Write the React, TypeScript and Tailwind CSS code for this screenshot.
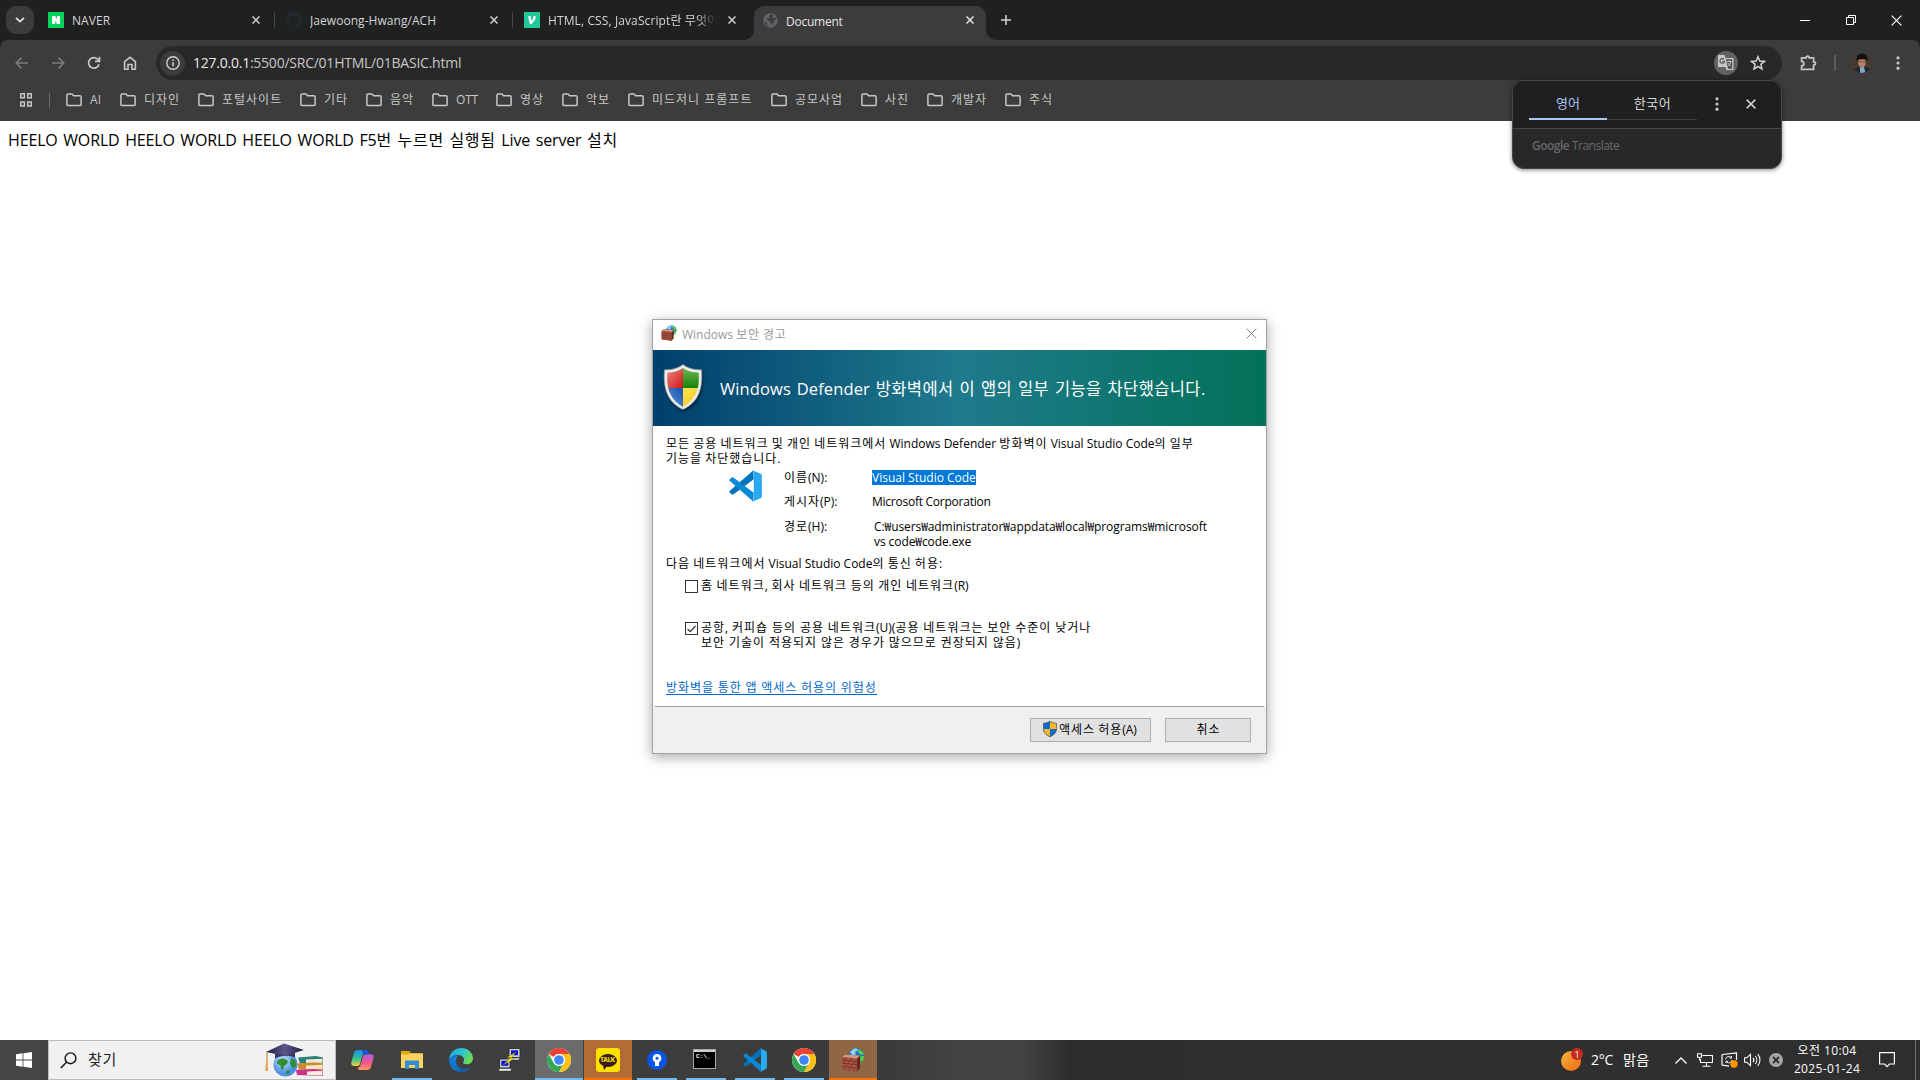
import type { ReactNode } from "react";

const bookmarks: { name: string; width: string; track: string }[] = [
  { name: "AI", width: "w-[54px]", track: "tracking-[0.1px]" },
  { name: "디자인", width: "w-[78px]", track: "tracking-[0.95px]" },
  { name: "포털사이트", width: "w-[102px]", track: "tracking-[1px]" },
  { name: "기타", width: "w-[66px]", track: "tracking-[1px]" },
  { name: "음악", width: "w-[66px]", track: "tracking-[1px]" },
  { name: "OTT", width: "w-[64px]", track: "tracking-[-0.2px]" },
  { name: "영상", width: "w-[66px]", track: "tracking-[1px]" },
  { name: "악보", width: "w-[66px]", track: "tracking-[1px]" },
  { name: "미드저니 프롬프트", width: "w-[143px]", track: "tracking-[1px]" },
  { name: "공모사업", width: "w-[90px]", track: "tracking-[1px]" },
  { name: "사진", width: "w-[66px]", track: "tracking-[1px]" },
  { name: "개발자", width: "w-[78px]", track: "tracking-[1px]" },
  { name: "주식", width: "w-[66px]", track: "tracking-[1px]" },
];

/* Gives Hangul runs their own letter spacing, leaving Latin runs as they are. */
function Mixed({ text, hangul = "tracking-[0.96px]" }: { text: string; hangul?: string }) {
  return (
    <>
      {text.split(/([가-힣]+)/).map((part, i) =>
        i % 2 ? (
          <span key={i} className={hangul}>
            {part}
          </span>
        ) : (
          part
        ),
      )}
    </>
  );
}

function Cross({ size, className, sw = 1.5 }: { size: number; className?: string; sw?: number }) {
  return (
    <svg width={size} height={size} viewBox="0 0 10 10" className={className} stroke="currentColor" strokeWidth={sw} fill="none">
      <path d="M0.6 0.6 9.4 9.4M9.4 0.6 0.6 9.4" />
    </svg>
  );
}

function Folder() {
  return (
    <svg width="16" height="14" viewBox="0 0 16 14" fill="none" stroke="#c7c7c7" strokeWidth="1.5" className="shrink-0">
      <path d="M0.9 2.2c0-.7.4-1.1 1.1-1.1h4l1.6 1.7h6.3c.7 0 1.2.4 1.2 1.1v7.6c0 .7-.5 1.1-1.2 1.1H2c-.7 0-1.1-.4-1.1-1.1z" />
    </svg>
  );
}

function Dots() {
  return (
    <svg width="4" height="14" viewBox="0 0 4 14" fill="#c7c7c7">
      <circle cx="2" cy="1.8" r="1.6" />
      <circle cx="2" cy="7" r="1.6" />
      <circle cx="2" cy="12.2" r="1.6" />
    </svg>
  );
}

function Chrome() {
  return (
    <svg width="24" height="24" viewBox="0 0 24 24">
      <circle cx="12" cy="12" r="12" fill="#fff" />
      <path d="M1.6 6A12 12 0 0 1 22.4 6H12a6 6 0 0 0-5.2 3z" fill="#ea4335" />
      <path d="M1.6 6 6.8 15A6 6 0 0 0 12 18l-1.5 5.9A12 12 0 0 1 1.6 6z" fill="#34a853" />
      <path d="M6.8 15A6 6 0 0 0 17.2 15L12 24A12 12 0 0 1 10.4 23.9z" fill="#34a853" />
      <path d="M22.4 6A12 12 0 0 1 12 24l5.2-9A6 6 0 0 0 12 6z" fill="#fbc116" />
      <circle cx="12" cy="12" r="6" fill="#fff" />
      <circle cx="12" cy="12" r="4.8" fill="#4285f4" />
    </svg>
  );
}

function VSCode({ width, height }: { width: number; height: number }) {
  return (
    <svg width={width} height={height} viewBox="0 0 24 24" preserveAspectRatio="none">
      <path d="M17.6 0.4 0.6 15.6c-.4.4-.4 1 0 1.4l1.3 1.2c.4.3.8.3 1.2.1L18 7z" fill="#0073ba" />
      <path d="M17.6 23.6 0.6 8.3c-.4-.4-.4-1 0-1.4l1.3-1.2c.4-.3.8-.3 1.2-.1L18 17z" fill="#0a8ad6" />
      <path d="M17.4 23.7c-.5 0-.9-.2-1.2-.5.7.7 1.8.2 1.8-.8V1.6c0-1-1.100-1.500-1.800-.8.4-.5 1.100-.6 1.800-.3l4.900 2.400c.6.3 1 .9 1 1.500v15.200c0 .6-.4 1.200-1 1.500l-4.900 2.400c-.200.100-.400.200-.600.200z" fill="#29a9f0" />
    </svg>
  );
}

function Firewall({ size }: { size: number }) {
  return (
    <svg width={size} height={size} viewBox="0 0 24 24">
      <circle cx="15.500" cy="8" r="7.800" fill="#2374d6" />
      <path d="M9 4.500C10.500 2 13 .4 15.500.3L17 2l-3 2 1 2-3 1.500z" fill="#8fd4f7" />
      <path d="M16 1.500c3-.5 6 2 7 4.500l-2.500 1L18 5.500zM19 8.500l4-.5c0 3-1 5-3 6.500z" fill="#5bd32c" />
      <path d="M1 9l3-2.500 15 1V20l-3 3.500L1 21.500z" fill="#6b291c" />
      <path d="M1 9l15 1.500v13L1 21.500z" fill="#a85443" />
      <path d="M1 9l3-2.500 15 1-3 3z" fill="#d09a85" />
      <path d="M1 12l15 1.500M1 15.200l15 1.500M1 18.400l15 1.700M5 9.500v3M10.500 10v3M3 12.300v3M8 12.800v3M13 13.400v3M5 15.700v3M10.500 16.300v3M3 18.800v3M8 19.300v3M13 20v3" stroke="#6e2c1f" strokeWidth=".7" />
    </svg>
  );
}

function Shield() {
  return (
    <svg width="40" height="46" viewBox="0 0 40 46" className="drop-shadow-[1px_2px_1px_rgba(0,0,0,0.5)]">
      <defs>
        <clipPath id="shieldClip">
          <path d="M20 4C16 7 10 8.500 4.500 8.500 3 22 6 35 20 43 34 35 37 22 35.500 8.500 30 8.500 24 7 20 4z" />
        </clipPath>
        <linearGradient id="shRed" x1="0" y1="0" x2="1" y2="1">
          <stop offset="0" stopColor="#f4a49a" />
          <stop offset="1" stopColor="#cf1515" />
        </linearGradient>
        <linearGradient id="shGreen" x1="0" y1="0" x2="0" y2="1">
          <stop offset="0" stopColor="#7fc05c" />
          <stop offset="1" stopColor="#138208" />
        </linearGradient>
        <linearGradient id="shBlue" x1="1" y1="0" x2="0" y2="1">
          <stop offset="0" stopColor="#1a50a8" />
          <stop offset="1" stopColor="#6ea8ee" />
        </linearGradient>
        <linearGradient id="shYellow" x1="0" y1="0" x2="1" y2="1">
          <stop offset="0" stopColor="#ffe94d" />
          <stop offset="1" stopColor="#f2b51c" />
        </linearGradient>
      </defs>
      <path d="M20 .5C15 4.500 8 6 1.500 5.800 0 23 3.500 38 20 45.500 36.500 38 40 23 38.500 5.800 32 6 25 4.500 20 .5z" fill="#e9ecec" stroke="#8e9794" strokeWidth=".7" />
      <g clipPath="url(#shieldClip)">
        <rect width="20" height="24" fill="url(#shRed)" />
        <rect x="20" width="20" height="24" fill="url(#shGreen)" />
        <rect y="24" width="20" height="22" fill="url(#shBlue)" />
        <rect x="20" y="24" width="20" height="22" fill="url(#shYellow)" />
      </g>
    </svg>
  );
}

function SmallShield() {
  return (
    <svg width="14" height="16" viewBox="0 0 14 16">
      <path d="M7 .3C5 1.600 2.800 2.200.4 2.300v5.200C.4 11.500 3.200 14.200 7 15.700z" fill="#1268c9" />
      <path d="M7 .3c2 1.300 4.200 1.900 6.600 2v5.200c0 4-2.800 6.700-6.600 8.200z" fill="#fbb829" />
      <path d="M.4 8H7v7.700C3.300 14.300.7 11.700.4 8z" fill="#fbb829" />
      <path d="M13.600 8H7v7.700c3.700-1.400 6.300-4 6.600-7.700z" fill="#1268c9" />
      <path d="M7 .3C5 1.600 2.800 2.200.4 2.300v5.200C.4 11.500 3.200 14.200 7 15.700c3.800-1.500 6.600-4.200 6.600-8.200V2.300C11.200 2.200 9 1.600 7 .3z" fill="none" stroke="#4a5560" strokeWidth=".8" />
    </svg>
  );
}

function Tab({ icon, title, track, width, fade }: { icon: ReactNode; title: string; track: string; width: string; fade?: boolean }) {
  return (
    <div className={`flex h-4 items-center ${width}`}>
      {icon}
      <div className={`ml-2 flex-1 overflow-hidden whitespace-nowrap text-[12px] leading-4 text-[#d5d5d5] ${track} ${fade ? "[mask-image:linear-gradient(90deg,#000_88%,transparent_100%)]" : ""}`}>
        <span className="relative top-px">{title}</span>
      </div>
      <Cross size={8} className="ml-3 shrink-0 text-[#d0d0d0]" sw={1.9} />
      <div className="w-3.5" />
    </div>
  );
}

function TitleStrip() {
  return (
    <div className="flex h-10 items-center bg-[#1f2020]">
      <div className="ml-1.5 flex size-7 items-center justify-center rounded-[10px] bg-[#3c3c3c]">
        <svg width="10" height="6" viewBox="0 0 10 6" fill="none" stroke="#e3e3e3" strokeWidth="1.8">
          <path d="M1 .8 5 4.600 9 .8" />
        </svg>
      </div>
      <div className="w-3.5" />
      <Tab
        width="w-[226px]"
        title="NAVER"
        track="tracking-[0.05px]"
        icon={
          <svg width="16" height="16" viewBox="0 0 16 16" className="shrink-0">
            <rect width="16" height="16" fill="#06d15c" />
            <path d="M4.100 4h3L9 7.300V4h3v8H9L7.100 8.800V12h-3z" fill="#fff" />
          </svg>
        }
      />
      <div className="h-4 w-px bg-[#474747]" />
      <div className="w-[11px]" />
      <Tab
        width="w-[226px]"
        title="Jaewoong-Hwang/ACH"
        track="tracking-[0.05px]"
        icon={
          <svg width="16" height="16" viewBox="0 0 16 16" className="shrink-0" fill="#24292f">
            <path d="M8 0C3.580 0 0 3.580 0 8c0 3.540 2.290 6.530 5.470 7.590.4.070.55-.17.55-.38 0-.19-.010-.82-.010-1.490-2.010.37-2.530-.49-2.690-.94-.090-.23-.48-.94-.82-1.130-.28-.15-.68-.52-.010-.53.63-.010 1.080.58 1.230.82.72 1.210 1.870.87 2.330.66.070-.52.28-.87.51-1.070-1.780-.2-3.640-.89-3.640-3.950 0-.87.31-1.590.82-2.150-.080-.2-.36-1.020.080-2.120 0 0 .67-.21 2.200.82.64-.18 1.320-.27 2-.27s1.360.090 2 .27c1.530-1.040 2.200-.82 2.200-.82.44 1.100.16 1.920.080 2.120.51.56.82 1.270.82 2.150 0 3.070-1.870 3.750-3.650 3.950.29.25.54.73.54 1.480 0 1.070-.010 1.930-.010 2.200 0 .21.15.46.55.38A8.010 8.010 0 0 0 16 8c0-4.420-3.580-8-8-8z" />
          </svg>
        }
      />
      <div className="h-4 w-px bg-[#474747]" />
      <div className="w-[11px]" />
      <Tab
        width="w-[226px]"
        title="HTML, CSS, JavaScript란 무엇이며"
        track="tracking-[0.11px]"
        fade
        icon={
          <svg width="16" height="16" viewBox="0 0 16 16" className="shrink-0">
            <rect width="16" height="16" rx="1" fill="#20c997" />
            <path d="M4 4.600 6.600 4l1 5.200c1.300-1.800 1.900-3 1.600-4.600.9-.8 2.500-.8 2.500.6 0 2-2.200 5-4.400 7H6z" fill="#fff" />
          </svg>
        }
      />
      <div className="w-[4px]" />
      <div className="relative flex h-[34px] w-[232px] items-center self-end rounded-t-[10px] bg-[#3c3c3c] pb-1.5">
        <svg width="10" height="10" viewBox="0 0 10 10" className="absolute bottom-0 -left-2.5" fill="#3c3c3c">
          <path d="M10 0v10H0A10 10 0 0 0 10 0z" />
        </svg>
        <svg width="10" height="10" viewBox="0 0 10 10" className="absolute -right-2.5 bottom-0" fill="#3c3c3c">
          <path d="M0 0v10h10A10 10 0 0 1 0 0z" />
        </svg>
        <svg width="15" height="15" viewBox="0 0 15 15" className="ml-[9px]">
          <circle cx="7.500" cy="7.500" r="7.200" fill="#5f6368" />
          <path d="M8 1.200 6 3.500l1 1.700H5L3.500 7 6 7.600l2 1.700-.5 2.500 3.500-2.300-.3-2L13.500 6 13 4.300 11 5.500 9.500 4.200 10.500 2zM1.500 8l3 2.500.2 2.500C2.800 12 1.700 10.200 1.500 8z" fill="#3c3c3c" />
        </svg>
        <span className="relative top-[1.5px] ml-2 flex-1 text-[12px] leading-4 tracking-[-0.25px] text-[#e3e3e3]">Document</span>
        <Cross size={8} className="mr-3 text-[#e3e3e3]" sw={1.900} />
      </div>
      <svg width="10" height="10" viewBox="0 0 10 10" className="ml-[15px]" stroke="#d0d0d0" strokeWidth="1.600">
        <path d="M5 0v10M0 5h10" />
      </svg>
      <div className="flex-1" />
      <div className="flex w-[120px] items-center text-white">
        <div className="h-px w-2.5 bg-white" />
        <svg width="10" height="10" viewBox="0 0 10 10" className="ml-9" fill="none" stroke="#fff">
          <path d="M.5 2.500h7v7h-7zM2.500 2.500v-2h7v7h-2" />
        </svg>
        <Cross size={11} className="ml-[35px]" sw={1.100} />
      </div>
    </div>
  );
}

function Toolbar() {
  return (
    <div className="bg-[#1f2020]">
      <div className="flex h-[46px] items-center rounded-t-[8px] bg-[#3c3c3c]">
        <svg width="14" height="12" viewBox="0 0 14 12" className="ml-[15px]" fill="none" stroke="#7b7b7b" strokeWidth="1.500">
          <path d="M6.500.6 1.200 6l5.300 5.400M1.500 6H13" />
        </svg>
        <svg width="14" height="12" viewBox="0 0 14 12" className="ml-[22px]" fill="none" stroke="#7b7b7b" strokeWidth="1.500">
          <path d="M7.500.6 12.800 6l-5.300 5.400M12.500 6H1" />
        </svg>
        <svg width="14" height="14" viewBox="0 0 14 14" className="ml-[22px]" fill="none" stroke="#c7c7c7" strokeWidth="1.700">
          <path d="M12 8.200A5.300 5.300 0 1 1 11.200 3.800L12.300 5M12.500.8v4.600H8" />
        </svg>
        <svg width="14" height="14" viewBox="0 0 14 14" className="ml-[22px]" fill="none" stroke="#c7c7c7" strokeWidth="1.600">
          <path d="M1.600 5.600 7 1.300l5.400 4.300v7.600H9V8.500H5v4.700H1.600z" />
        </svg>
        <div className="ml-[19px] flex h-[34px] w-[1626px] items-center rounded-full bg-[#282828]">
          <div className="ml-1 flex size-[25px] items-center justify-center rounded-full bg-[#3c3c3c]">
            <svg width="14" height="14" viewBox="0 0 14 14" fill="none" stroke="#d0d0d0" strokeWidth="1.400">
              <circle cx="7" cy="7" r="6.200" />
              <path d="M7 6.300v4M7 3.600v1.500" strokeWidth="1.500" />
            </svg>
          </div>
          <span className="ml-2 pb-px text-[14px] tracking-[-0.24px] text-[#c7c7c7]">
            <span className="text-[#e8e8e8]">127.0.0.1</span>:5500/SRC/01HTML/01BASIC.html
          </span>
          <div className="flex-1" />
          <div className="flex size-6 items-center justify-center rounded-full bg-[#626262]">
            <svg width="18" height="18" viewBox="0 0 18 18">
              <path d="M1 1h6.500l1 3H16.500v12H9.500L8.500 13H1z" fill="#c7c7c7" />
              <path d="M9 5.300h6.200v9.400h-4l-.5-1.200z" fill="#4e4e4e" />
              <path d="M7.200 5.700A2.300 2.300 0 1 0 7.500 7.500H5.200" fill="none" stroke="#555" strokeWidth="1.200" />
              <path d="M10 7.500h4.600M12.300 6.300v1.200M14 7.500c-.5 2-1.800 3.500-3.300 4.600M10.800 8.700c.6 1.500 2 2.700 3.600 3.500" fill="none" stroke="#c7c7c7" strokeWidth="1" />
            </svg>
          </div>
          <svg width="16" height="16" viewBox="0 0 16 16" className="mr-4 ml-3" fill="none" stroke="#d0d0d0" strokeWidth="1.500">
            <path d="M8 1.700 9.800 6l4.700.4-3.600 3 1.100 4.600L8 11.500 4 14l1.100-4.600-3.600-3L6.200 6z" />
          </svg>
        </div>
        <svg width="17" height="16" viewBox="0 0 17 16" className="ml-[18px] mb-px" fill="none" stroke="#c7c7c7" strokeWidth="1.700">
          <path d="M1.600 2.900h4.600c0-2.400 3-2.400 3 0h4.400v3.900c2.500 0 2.500 3.200 0 3.200v4.400h-12v-3.500c3-.3 3-4.200 0-4.500z" />
        </svg>
        <div className="ml-[17px] h-4 w-0.5 bg-[#5a5a5a]" />
        <svg width="20" height="20" viewBox="0 0 20 20" className="ml-4">
          <defs>
            <clipPath id="avatarClip">
              <circle cx="10" cy="10" r="10" />
            </clipPath>
          </defs>
          <g clipPath="url(#avatarClip)">
            <rect width="20" height="20" fill="#463a30" />
            <path d="M0 20c1-5 5-6 10-6s9 1 10 6z" fill="#22262d" />
            <path d="M8 14h4l1.500 6H8z" fill="#7fa6cc" />
            <ellipse cx="10" cy="9.500" rx="3.800" ry="4.800" fill="#b98069" />
            <path d="M4.800 8.500C3.500 2 8 .5 10.500.5S16.500 2.500 15.200 8.500L13.800 6.500 8 6.200 6 7z" fill="#120f0e" />
            <path d="M7.500 8.800h2M11 8.800h2" stroke="#4b2c22" strokeWidth=".8" />
          </g>
        </svg>
        <div className="ml-6">
          <Dots />
        </div>
      </div>
      <div className="flex h-[35px] items-start bg-[#3c3c3c] pt-1.5">
        <div className="flex h-4 w-[66px] items-center">
          <svg width="12" height="14" viewBox="0 0 12 14" className="ml-5" fill="none" stroke="#c7c7c7" strokeWidth="1.500">
            <path d="M.8.800h3.600v4H.8zM7.800.800h3.500v4H7.800zM.8 9h3.600v4H.8zM7.800 9h3.500v4H7.800z" />
          </svg>
          <div className="ml-[17px] h-[15px] w-px bg-[#6a6a6a]" />
        </div>
        {bookmarks.map((b) => (
          <div key={b.name} className={`flex h-4 items-center gap-2 ${b.width}`}>
            <Folder />
            <span className={`whitespace-nowrap text-[12px] leading-4 text-[#c7c7c7] ${b.track}`}>{b.name}</span>
          </div>
        ))}
      </div>
    </div>
  );
}

function TranslatePopup() {
  return (
    <div className="absolute top-20 left-[1512px] h-[89px] w-[270px] overflow-hidden rounded-[12px] border border-[#454648] bg-[#282828] shadow-[0_1px_4px_rgba(0,0,0,0.5)]">
      <div className="flex h-12 items-start border-b border-[#47484a] bg-[#1f1f1f] pl-4">
        <div className="flex h-[39px] w-[78px] items-center justify-center border-b-2 border-[#a8c7fa] pt-[9px] text-[13px] text-[#a8c7fa]">영어</div>
        <div className="flex h-[39px] w-[90px] items-center justify-center border-b border-[#3f4042] pt-2 pl-px text-[13px] tracking-[0.5px] text-[#d5d5d5]">한국어</div>
        <div className="mt-4 ml-[18px]">
          <Dots />
        </div>
        <Cross size={10} className="mt-[18px] ml-[27px] text-[#d0d0d0]" sw={1.500} />
      </div>
      <div className="pt-2 pl-[19px] text-[12px] leading-[17px] tracking-[-0.5px] text-[#67696d]">
        <span className="font-semibold">Google</span> Translate
      </div>
    </div>
  );
}

function Field({ label, children, className }: { label: string; children: ReactNode; className: string }) {
  return (
    <div className={`flex ${className}`}>
      <span className="w-[88px]">
        <Mixed text={label} />
      </span>
      {children}
    </div>
  );
}

function SecurityDialog() {
  return (
    <div className="absolute top-[319px] left-[652px] flex h-[435px] w-[615px] flex-col border border-[#a3a3a3] bg-white text-[12px] leading-[15px] whitespace-nowrap text-black shadow-[0_3px_12px_rgba(0,0,0,0.35)]">
      <div className="flex h-[30px] items-center">
        <div className="ml-2 pb-1">
          <Firewall size={16} />
        </div>
        <span className="ml-[5px] flex-1 pb-0.5 text-[#999]">
          <Mixed text="Windows 보안 경고" hangul="tracking-[0.8px]" />
        </span>
        <Cross size={11} className="mr-[9px] mb-1 text-[#8a8a8a]" sw={0.900} />
      </div>
      <div className="flex h-[76px] items-center bg-[linear-gradient(90deg,#003f6d_0%,#1f7a8c_50%,#027158_100%)]">
        <div className="ml-[10px] pb-0.5">
          <Shield />
        </div>
        <span className="ml-[17px] text-[16.500px] tracking-[0.1px] text-white [word-spacing:1.500px]">
          <Mixed text="Windows Defender 방화벽에서 이 앱의 일부 기능을 차단했습니다." hangul="tracking-[0.38px]" />
        </span>
      </div>
      <div className="flex-1 pt-2.5 pl-[13px]">
        <p>
          <Mixed text="모든 공용 네트워크 및 개인 네트워크에서 Windows Defender 방화벽이 Visual Studio Code의 일부" hangul="tracking-[1px]" />
        </p>
        <p>
          <Mixed text="기능을 차단했습니다." />
        </p>
        <div className="flex h-[90px]">
          <div className="mt-1 ml-[63px]">
            <VSCode width={33} height={32} />
          </div>
          <div className="ml-[22px]">
            <Field label="이름(N):" className="mt-1">
              <span className="h-[15px] bg-[#0078d7] text-white">Visual Studio Code</span>
            </Field>
            <Field label="게시자(P):" className="mt-[9px]">
              <span className="tracking-[-0.25px]">Microsoft Corporation</span>
            </Field>
            <Field label="경로(H):" className="mt-2.5">
              <div className="pl-0.5">
                <p className="tracking-[-0.08px]">C:₩users₩administrator₩appdata₩local₩programs₩microsoft</p>
                <p className="tracking-[-0.08px]">vs code₩code.exe</p>
              </div>
            </Field>
          </div>
        </div>
        <p>
          <Mixed text="다음 네트워크에서 Visual Studio Code의 통신 허용:" hangul="tracking-[1px]" />
        </p>
        <div className="mt-[7px] flex pl-[19px]">
          <div className="mt-[2px] size-[13px] border border-[#333]" />
          <span className="ml-[3px] [word-spacing:0.400px]">
            <Mixed text="홈 네트워크, 회사 네트워크 등의 개인 네트워크(R)" hangul="tracking-[1px]" />
          </span>
        </div>
        <div className="mt-[27px] flex pl-[19px]">
          <div className="mt-[2px] flex size-[13px] items-center justify-center border border-[#333]">
            <svg width="9" height="8" viewBox="0 0 9 8" fill="none" stroke="#333" strokeWidth="1.200">
              <path d="M.6 4 3.200 6.700 8.500 1" />
            </svg>
          </div>
          <div className="ml-[3px] [word-spacing:0.700px]">
            <p>
              <Mixed text="공항, 커피숍 등의 공용 네트워크(U)(공용 네트워크는 보안 수준이 낮거나" hangul="tracking-[1px]" />
            </p>
            <p>
              <Mixed text="보안 기술이 적용되지 않은 경우가 많으므로 권장되지 않음)" hangul="tracking-[1px]" />
            </p>
          </div>
        </div>
        <div className="mt-[30px] flex">
          <span className="h-[15px] border-b border-[#0066cc] text-[#0066cc] [word-spacing:0.500px]">
            <Mixed text="방화벽을 통한 앱 액세스 허용의 위험성" hangul="tracking-[1px]" />
          </span>
        </div>
      </div>
      <div className="flex h-[47px] items-start bg-[#f0f0f0]">
        <div className="mx-0.5 flex flex-1 justify-end border-t border-[#a0a0a0] pt-[11px] pr-[13px]">
          <div className="flex h-6 w-[121px] items-center justify-center border border-[#adadad] bg-[#e1e1e1] pr-px pb-0.5">
            <SmallShield />
            <span className="ml-0.5">
              <Mixed text="액세스 허용(A)" />
            </span>
          </div>
          <div className="ml-3.5 flex h-6 w-[86px] items-center justify-center border border-[#adadad] bg-[#e1e1e1] pb-0.5 pl-px tracking-[0.9px]">취소</div>
        </div>
      </div>
    </div>
  );
}

function TaskbarApp({ children, state = "idle" }: { children: ReactNode; state?: "idle" | "open" | "active" | "alert" | "alertDim" }) {
  const bg = { idle: "", open: "", active: "bg-[#6b6b6b]", alert: "bg-[#b56c34]", alertDim: "bg-[#8f6646]" }[state];
  const bar = { idle: "w-0", open: "w-10 bg-[#76b9ed]", active: "w-12 bg-[#76b9ed]", alert: "w-12 bg-[#ff7300]", alertDim: "w-12 bg-[#ff7300]" }[state];
  return (
    <div className={`mr-px flex h-10 w-12 flex-col items-center ${bg}`}>
      <div className="flex h-[38px] items-center justify-center pt-0.5">{children}</div>
      <div className={`h-0.5 ${bar}`} />
    </div>
  );
}

function Taskbar() {
  return (
    <div className="flex h-10 items-center bg-[linear-gradient(90deg,#454545_0px,#404040_400px,#3a3a3a_880px,#434343_960px,#434343_1020px,#2d2d2d_1070px,#303030_1400px,#2e2e2e_1920px)] text-white">
      <div className="flex h-10 w-12 items-center justify-center">
        <svg width="16" height="16" viewBox="0 0 16 16" fill="#fff">
          <path d="M0 2.200 6.600 1.300v6.300H0zM7.400 1.200 16 0v7.600H7.400zM0 8.400h6.600v6.300L0 13.800zM7.400 8.400H16V16l-8.600-1.200z" />
        </svg>
      </div>
      <div className="flex h-10 w-72 items-center border border-[#bdbdbd] bg-[#f1f1f1]">
        <svg width="17" height="17" viewBox="0 0 17 17" className="ml-[11px]" fill="none" stroke="#111" strokeWidth="1.400">
          <circle cx="10.500" cy="6.300" r="5.400" />
          <path d="M6.500 10.200.8 16" />
        </svg>
        <span className="ml-[11px] flex-1 pb-px text-[15px] tracking-[0.8px] text-[#222]">찾기</span>
        <svg width="60" height="34" viewBox="0 0 60 34" className="mr-[11px]">
          <defs>
            <radialGradient id="globeSea" cx=".4" cy=".35">
              <stop offset="0" stopColor="#c9e6ff" />
              <stop offset="1" stopColor="#4f8fe6" />
            </radialGradient>
            <linearGradient id="capTop" x1="0" x2="1">
              <stop offset="0" stopColor="#222140" />
              <stop offset=".5" stopColor="#5b568c" />
              <stop offset="1" stopColor="#23213f" />
            </linearGradient>
          </defs>
          <circle cx="21.500" cy="21.500" r="12" fill="url(#globeSea)" />
          <path d="M13 18.500c2-3 6-3.500 8-2.500l3 2-1 3-3 2-1 4-2-1-.5-3.500-3.500-2zM27 15l4 2 1.500 5-2 3-3-1-1.500-4zM22 28l4-1-1 3.500-3 1z" fill="#2f8f35" />
          <path d="M11 8.500h20v6c-5-2.500-15-2.500-20 1z" fill="#39345f" />
          <path d="M2 9 20 .5l20 6.500-19 6z" fill="url(#capTop)" />
          <path d="M3 9v12" stroke="#d98a45" strokeWidth="1.200" />
          <path d="M2 19h1.800l.4 9H1z" fill="#f0a35c" />
          <path d="M34 14.500 52 13l7 1.500v6H36z" fill="#2e7f7c" />
          <path d="M42 16.500l16.500-.8v4L42 20z" fill="#f2ead6" />
          <path d="M33 20.500 50 19.500l9 1.200v6H35z" fill="#c98a2c" />
          <path d="M42 22.500l16.500-.8v4L42 26z" fill="#f4e6c4" />
          <path d="M32 27 50 26l9 1.200v5.800L33 32z" fill="#c9308f" />
          <path d="M43 28.500l15.500-.8v4.800l-15.500-.5z" fill="#f6ead8" />
        </svg>
      </div>
      <div className="w-[2.500px]" />
      <TaskbarApp>
        <svg width="23" height="22" viewBox="0 0 23 22">
          <defs>
            <linearGradient id="cpA" x1="0" y1="0" x2="0" y2="1">
              <stop offset="0" stopColor="#1b8ff0" />
              <stop offset=".55" stopColor="#36c28d" />
              <stop offset="1" stopColor="#f4d03a" />
            </linearGradient>
            <linearGradient id="cpB" x1="0" y1="0" x2="0" y2="1">
              <stop offset="0" stopColor="#b45be8" />
              <stop offset=".55" stopColor="#f0568c" />
              <stop offset="1" stopColor="#fb9a52" />
            </linearGradient>
          </defs>
          <path d="M6.500 1H15l1.500 4h-3.200c-1 0-1.700.8-2 1.700L9 15c-.4 1.300-1.400 2-2.600 2H3C.8 17-.2 15.200.4 13L3 4c.5-1.800 1.800-3 3.500-3z" fill="url(#cpA)" />
          <path d="M16.500 21H8.500c-1 0-1.600-1-2-2.200 1.600-.3 2.500-1.300 3-2.800L12 7.500c.4-1.400 1.300-2.300 2.800-2.300H20c2.200 0 3.200 1.700 2.600 3.900L20 18c-.5 1.800-1.800 3-3.500 3z" fill="url(#cpB)" />
          <path d="M11 1h5c1 0 1.700 1.500 2 4.200h-3.200c-1.300 0-1.800.5-2.300 1.400z" fill="#1558c8" />
        </svg>
      </TaskbarApp>
      <TaskbarApp state="open">
        <svg width="22" height="18" viewBox="0 0 22 18">
          <path d="M0 0h8l2 2.200h12V17H0z" fill="#ffd35c" />
          <path d="M0 0h8l1.500 2.200L8 3.500H0z" fill="#e5a50e" />
          <path d="M4 10.500c0-.6.4-1 1-1h12c.6 0 1 .4 1 1V18h-4v-4H8v4H4z" fill="#2f8fdc" />
        </svg>
      </TaskbarApp>
      <TaskbarApp>
        <svg width="24" height="24" viewBox="0 0 24 24">
          <defs>
            <linearGradient id="edTop" x1="0" y1="0" x2="1" y2=".4">
              <stop offset="0" stopColor="#1ba5e6" />
              <stop offset=".6" stopColor="#2fc6d0" />
              <stop offset="1" stopColor="#6ddb4d" />
            </linearGradient>
            <linearGradient id="edLow" x1="0" y1="0" x2=".5" y2="1">
              <stop offset="0" stopColor="#1b8fe0" />
              <stop offset="1" stopColor="#0f5cb4" />
            </linearGradient>
          </defs>
          <path d="M0 11.500C.5 5 5.500 0 12 0c7 0 12 5 12 10.300 0 3.700-2.800 6-6.200 6-2.300 0-3.800-.8-3.800-1.700 0-.6 1-1.200 1-2.900C15 9 12.500 7 9 7c-4 0-7.500 2-9 4.500z" fill="url(#edTop)" />
          <path d="M0 11.500C1.500 8.500 5 6.500 9 6.500c-3 1-4.500 4-4.500 7.500 0 5 4 9 9.500 9.400C7 25.500 0 20 0 11.500z" fill="#1277cf" />
          <path d="M9.500 7.500C7.300 9 6.500 11.500 7 14.500c.8 4 4.500 6.500 8.500 6.500 2.500 0 4.500-.8 6.300-2-1.800 3-5.500 5-9.300 5C7 23.500 3.500 19.500 3.500 14.500c0-4 2.500-7 6-7z" fill="url(#edLow)" />
        </svg>
      </TaskbarApp>
      <TaskbarApp>
        <svg width="24" height="24" viewBox="0 0 24 24">
          <path d="M11 .5h11v9H11z" fill="#cfcfcf" stroke="#222" strokeWidth=".8" />
          <path d="M13 2.300h7v5h-7z" fill="#0a14d8" />
          <path d="M9.500 9.500h13l-1.500 3h-12z" fill="#bdbdbd" stroke="#222" strokeWidth=".8" />
          <path d="M1.500 11h10.500v9H1.500z" fill="#cfcfcf" stroke="#222" strokeWidth=".8" />
          <path d="M3.300 12.800h7v5h-7z" fill="#0a14d8" />
          <path d="M1 20.300h13l-1 3H.5z" fill="#e8e8e8" stroke="#222" strokeWidth=".8" />
          <path d="M18 4 9 9.500h4L5 17l11-6h-3.500z" fill="#f7ee1f" stroke="#77700a" strokeWidth=".4" />
        </svg>
      </TaskbarApp>
      <TaskbarApp state="active">
        <Chrome />
      </TaskbarApp>
      <TaskbarApp state="alert">
        <div className="flex size-6 items-center justify-center rounded-[3px] bg-[#fbe000]">
          <div className="relative flex h-[13px] w-[18px] items-center justify-center rounded-[50%] bg-[#371d1e] font-['Inter'] text-[6px] leading-none font-extrabold tracking-[-0.2px] text-[#fbe000]">
            TALK
            <svg width="5" height="5" viewBox="0 0 5 5" className="absolute -bottom-[3px] left-[4px]" fill="#371d1e">
              <path d="M0 0h5L1 5z" />
            </svg>
          </div>
        </div>
      </TaskbarApp>
      <TaskbarApp state="open">
        <svg width="20" height="20" viewBox="0 0 20 20">
          <circle cx="10" cy="10" r="10" fill="#0a55e8" />
          <path d="M10 4a4.300 4.300 0 0 0-2 8.100V16h4v-3.900A4.300 4.300 0 0 0 10 4z" fill="#fff" />
          <circle cx="10" cy="8.300" r="1.500" fill="#0a55e8" />
        </svg>
      </TaskbarApp>
      <TaskbarApp state="open">
        <div className="mr-0.5 mb-0.5 flex h-5 w-[23px] flex-col border border-[#a9a9a9] bg-black">
          <div className="h-[2px] bg-[#cfcfcf]" />
          <div className="mt-[2px] ml-0.5 font-['Liberation_Mono'] text-[6px] leading-[6px] font-bold text-white">C:\_</div>
        </div>
      </TaskbarApp>
      <TaskbarApp state="open">
        <VSCode width={24} height={24} />
      </TaskbarApp>
      <TaskbarApp state="open">
        <Chrome />
      </TaskbarApp>
      <TaskbarApp state="alertDim">
        <Firewall size={24} />
      </TaskbarApp>
      <div className="flex-1" />
      <div className="flex h-10 w-[359px] items-center">
        <div className="relative h-[22px] w-[22px]">
          <div className="absolute top-[2px] left-0 size-5 rounded-full bg-[linear-gradient(135deg,#f6b73c,#f07a1a_75%)]" />
          <div className="absolute -top-px left-[10px] flex size-3 items-center justify-center rounded-full bg-[#c42b1c] text-[9px] leading-none text-white">1</div>
        </div>
        <span className="ml-2 w-8 pb-px text-[14px] tracking-[-0.27px]">2°C</span>
        <span className="w-[52px] pb-px text-[14px] tracking-[0.4px]">맑음</span>
        <svg width="12" height="7" viewBox="0 0 12 7" fill="none" stroke="#fff" strokeWidth="1.300">
          <path d="M.5 6.500 6 1l5.500 5.500" />
        </svg>
        <svg width="16" height="14" viewBox="0 0 16 14" className="ml-2.5" fill="none" stroke="#fff" strokeWidth="1.100">
          <path d="M5.500 2.500h10v7h-12V6M5.500 13.300h8M9.500 9.500v4M.5.800h4v3.500h-4zM2.500 4.300v3" />
        </svg>
        <svg width="17" height="16" viewBox="0 0 17 16" className="ml-2" fill="none" stroke="#fff" strokeWidth="1.200">
          <path d="M1 2.500 15.500.8V8M8 14.200 1 13V2.500" />
          <path d="M4.500 7.500c.3-3 4-3.800 6-1.800V4M10.500 6H8.500M11 8c-.5 3-4 3.800-6 1.500V11M5 9.300h2" strokeWidth="1" />
          <circle cx="13" cy="12" r="3.700" fill="#ff9500" stroke="none" />
        </svg>
        <svg width="17" height="14" viewBox="0 0 17 14" className="ml-1.5" fill="none" stroke="#fff" strokeWidth="1.100">
          <path d="M.6 4.800h2.200L6.500 1.300v11.400L2.800 9.200H.6zM9 4.800c1 1.200 1 3.200 0 4.400M11.300 3c2 2.300 2 5.700 0 8M13.700 1.200c3 3.200 3 8.400 0 11.600" />
        </svg>
        <svg width="14" height="14" viewBox="0 0 14 14" className="ml-2">
          <circle cx="7" cy="7" r="7" fill="#a6a6a6" />
          <path d="M4 4l6 6M10 4l-6 6" stroke="#2d2d2d" strokeWidth="1.800" />
        </svg>
        <div className="flex h-10 w-[88px] flex-col items-center text-[12px] leading-[18px] whitespace-nowrap">
          <span className="mt-0.5 tracking-[0.42px]">오전 10:04</span>
          <span className="tracking-[0.36px]">2025-01-24</span>
        </div>
        <svg width="16" height="16" viewBox="0 0 16 16" className="ml-2" fill="none" stroke="#fff" strokeWidth="1.200">
          <path d="M.6.600h14.800v11.400h-5L8 14.600 5.600 12h-5z" />
        </svg>
        <div className="ml-5 h-10 w-px bg-[#6e6e6e]" />
      </div>
    </div>
  );
}

export default function App() {
  return (
    <div className="relative flex h-[1080px] w-[1920px] flex-col overflow-hidden bg-white font-['Open_Sans','Noto_Sans_CJK_KR',sans-serif]">
      <TitleStrip />
      <Toolbar />
      <main className="flex-1 px-2 pt-2">
        <p className="text-[16px] leading-[22px] tracking-[-0.15px] text-black [word-spacing:1.600px]">
          <Mixed text="HEELO WORLD HEELO WORLD HEELO WORLD F5번 누르면 실행됨 Live server 설치" hangul="tracking-[0.7px]" />
        </p>
      </main>
      <Taskbar />
      <TranslatePopup />
      <SecurityDialog />
    </div>
  );
}
